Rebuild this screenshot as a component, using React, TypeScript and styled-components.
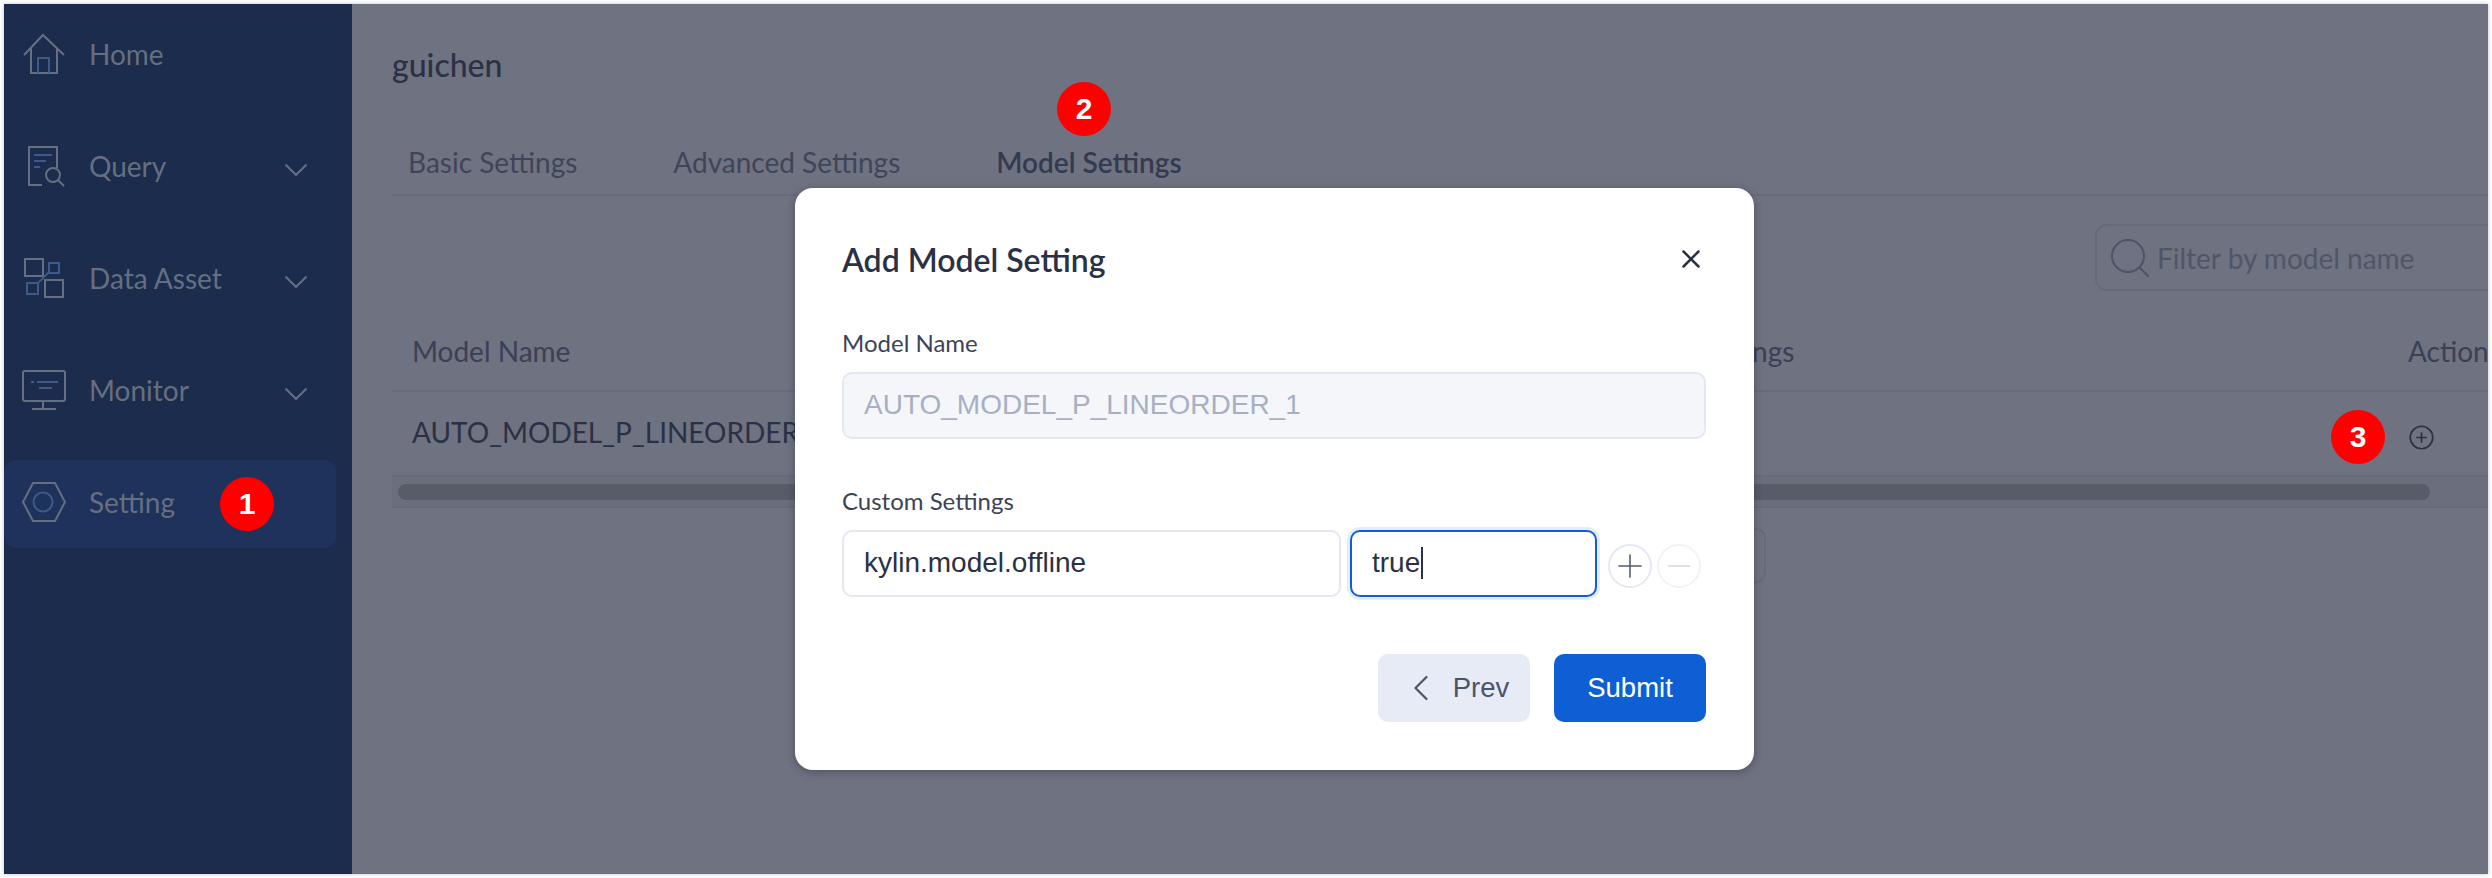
import React from 'react';
import styled, { createGlobalStyle } from 'styled-components';
import { ChevronDown, ChevronLeft, Search, Plus, Minus, X, CirclePlus } from 'lucide-react';

const Global = createGlobalStyle`
  html, body { margin: 0; padding: 0; background: #fff; }
  body { font-family: Lato, "Liberation Sans", sans-serif; }
`;

const Frame = styled.div`
  position: relative;
  width: 2492px;
  height: 878px;
  box-sizing: border-box;
  padding: 4px;
  overflow: hidden;
`;

const Screen = styled.div`
  display: flex;
  height: 100%;
  background: #6f7280;
  box-shadow: 0 0 4px rgba(0, 0, 0, 0.25);
`;

const Sidebar = styled.nav`
  width: 348px;
  flex: none;
  background: #1b2c4c;
  display: flex;
  flex-direction: column;
  gap: 24px;
  padding-top: 8px;
  box-sizing: border-box;
`;

const NavItem = styled.div<{ $active?: boolean }>`
  width: 332px;
  height: 88px;
  display: flex;
  align-items: center;
  box-sizing: border-box;
  padding: 0 20px 0 18px;
  border-radius: 12px;
  background: ${p => (p.$active ? '#1e325b' : 'transparent')};
  color: #666f82;
  font-size: 28px;
`;

const NavIcon = styled.svg`
  width: 44px;
  height: 44px;
  flex: none;
  margin: -4px 23px 0 0;
  fill: none;
  stroke: #666f82;
  stroke-width: 2;
`;

const NavLabel = styled.span`
  flex: 1;
  margin-top: -5px;
`;

const NavChevron = styled(ChevronDown)`
  color: #666f82;
  margin-top: 4px;
`;

const Content = styled.main`
  flex: 1;
  min-width: 0;
  padding-left: 40px;
  color: #2b3145;
  overflow: hidden;
`;

const PageTitle = styled.h1`
  margin: 43px 0 0;
  font-size: 32px;
  line-height: 36px;
  font-weight: 500;
  color: #2b3145;
`;

const Tabs = styled.div`
  display: flex;
  gap: 96px;
  height: 64px;
  box-sizing: border-box;
  margin-top: 49px;
  padding: 0 16px 3px;
  align-items: center;
  border-bottom: 2px solid #676a79;
  font-size: 28px;
`;

const Tab = styled.span<{ $active?: boolean }>`
  color: ${p => (p.$active ? '#343a50' : '#3f4559')};
  font-weight: ${p => (p.$active ? 600 : 400)};
`;

const FilterRow = styled.div`
  display: flex;
  justify-content: flex-end;
  margin-top: 28px;
`;

const FilterBox = styled.div`
  flex: 0 0 500px;
  height: 67px;
  margin-right: -107px;
  box-sizing: border-box;
  border: 2px solid #666a7b;
  border-radius: 12px;
  display: flex;
  align-items: center;
  gap: 3px;
  padding: 0 9px;
  color: #505668;
  font-size: 28px;
`;

const Table = styled.div`
  margin-top: 22px;
`;

const TableRow = styled.div<{ $head?: boolean }>`
  height: ${p => (p.$head ? 79 : 85)}px;
  display: flex;
  align-items: center;
  padding: 0 0 ${p => (p.$head ? 2 : 4)}px 20px;
  border-bottom: 2px solid #666a7b;
  box-sizing: border-box;
  font-size: 28px;
  color: ${p => (p.$head ? '#3a4056' : '#2b3145')};
`;

const Cell = styled.div<{ $w?: number }>`
  flex: ${p => (p.$w ? `0 0 ${p.$w}px` : '1')};
  white-space: nowrap;
`;

const RowAction = styled(CirclePlus)`
  display: block;
  margin-top: 12px;
  color: #2b3145;
`;

const ScrollTrack = styled.div`
  height: 31px;
  background: #6b6e7c;
  display: flex;
  align-items: center;
  padding-left: 6px;
  border-bottom: 2px solid #666a7b;
  box-sizing: border-box;
`;

const ScrollThumb = styled.div`
  width: 2032px;
  height: 16px;
  background: #585b68;
  border-radius: 8px;
`;

const PagerRow = styled.div`
  display: flex;
  justify-content: flex-end;
  width: 1374px;
  margin-top: 20px;
`;

const PagerBox = styled.div`
  width: 200px;
  height: 55px;
  box-sizing: border-box;
  border: 2px solid #666a7b;
  border-radius: 10px;
`;

const Badge = styled.span<{ $x: number; $y: number }>`
  position: absolute;
  left: ${p => p.$x}px;
  top: ${p => p.$y}px;
  width: 54px;
  height: 54px;
  border-radius: 50%;
  background: #fe0000;
  color: #fff;
  font: 700 30px/54px "Liberation Sans", sans-serif;
  text-align: center;
  z-index: 3;
`;

const Modal = styled.div`
  position: absolute;
  left: 795px;
  top: 188px;
  width: 959px;
  height: 582px;
  box-sizing: border-box;
  background: #fff;
  border-radius: 18px;
  box-shadow: 0 2px 8px rgba(30, 35, 55, 0.4);
  padding: 52px 48px 48px 47px;
  display: flex;
  flex-direction: column;
  z-index: 2;
`;

const ModalHead = styled.div`
  display: flex;
  justify-content: space-between;
  align-items: center;
  height: 38px;
`;

const ModalTitle = styled.h2`
  margin: 0;
  font-size: 32px;
  font-weight: 600;
  color: #2b3145;
`;

const CloseButton = styled(X)`
  color: #2b3145;
`;

const Field = styled.div<{ $top: number }>`
  margin-top: ${p => p.$top}px;
`;

const FieldLabel = styled.label`
  display: block;
  font-size: 24px;
  line-height: 28px;
  color: #3d4356;
  margin-bottom: 15px;
`;

const InputBox = styled.div<{ $disabled?: boolean; $focus?: boolean; $w?: number }>`
  height: 67px;
  ${p => (p.$w ? `flex: 0 0 ${p.$w}px; width: ${p.$w}px;` : '')}
  box-sizing: border-box;
  display: flex;
  align-items: center;
  padding: 0 20px 2px;
  border-radius: 10px;
  border: 2px solid ${p => (p.$focus ? '#0f5fd4' : '#e3e8f3')};
  background: ${p => (p.$disabled ? '#f4f6fa' : '#fff')};
  color: ${p => (p.$disabled ? '#a7b0c2' : '#2b3145')};
  box-shadow: ${p => (p.$focus ? '0 0 0 3px #e4edfa' : 'none')};
  font: 28px/1 "Liberation Sans", sans-serif;
`;

const Caret = styled.span`
  display: inline-block;
  width: 2px;
  height: 32px;
  margin-left: 1px;
  background: #2b3145;
`;

const SettingRow = styled.div`
  display: flex;
  align-items: center;
  gap: 9px;
`;

const RoundButton = styled.button<{ $off?: boolean }>`
  width: 44px;
  height: 44px;
  padding: 0;
  margin: 4px 0 0 ${p => (p.$off ? -4 : 2)}px;
  border-radius: 50%;
  background: #fff;
  display: flex;
  align-items: center;
  justify-content: center;
  border: 2px solid ${p => (p.$off ? '#f1f3f8' : '#e3e8f3')};
  color: ${p => (p.$off ? '#d3d7e0' : '#565c6e')};
`;

const ModalFooter = styled.div`
  display: flex;
  justify-content: flex-end;
  gap: 24px;
  margin-top: auto;
`;

const FooterButton = styled.button<{ $primary?: boolean }>`
  width: 152px;
  height: 68px;
  padding: 0;
  border: 0;
  border-radius: 10px;
  display: flex;
  align-items: center;
  justify-content: center;
  gap: 10px;
  background: ${p => (p.$primary ? '#0f5fd4' : '#e7ebf5')};
  color: ${p => (p.$primary ? '#fff' : '#4d5468')};
  font: 27.5px "Liberation Sans", sans-serif;
`;

const ACCENT = '#3d5a8a';

function HomeIcon() {
  return (
    <NavIcon viewBox="0 0 44 44">
      <path d="M2 23 21 3l21 20" />
      <path d="M9 16v25h26V16" />
      <path d="M16 41V26h11v15" stroke={ACCENT} />
    </NavIcon>
  );
}

function QueryIcon() {
  return (
    <NavIcon viewBox="0 0 44 44">
      <path d="M35 24V3H7v38h13" />
      <path d="M12 11h18M12 17h12M12 23h6" stroke={ACCENT} />
      <circle cx="31" cy="31" r="7" />
      <path d="m36 36 6 6" />
    </NavIcon>
  );
}

function AssetIcon() {
  return (
    <NavIcon viewBox="0 0 44 44">
      <rect x="3" y="3" width="18" height="17" />
      <rect x="27" y="7" width="10" height="10" stroke={ACCENT} />
      <rect x="5" y="27" width="11" height="11" stroke={ACCENT} />
      <rect x="23" y="24" width="18" height="17" />
      <path d="m16 27 11-11" stroke={ACCENT} />
    </NavIcon>
  );
}

function MonitorIcon() {
  return (
    <NavIcon viewBox="0 0 44 44">
      <rect x="1" y="3" width="42" height="30" rx="2" />
      <path d="M21 33v7M10 41h24" />
      <path d="M9 14h3M15 14h21M17 20h13" stroke={ACCENT} />
    </NavIcon>
  );
}

function SettingIcon() {
  return (
    <NavIcon viewBox="0 0 44 44">
      <path d="M11 3h22l10 19-10 19H11L1 22Z" />
      <circle cx="21" cy="22" r="9.5" stroke={ACCENT} />
    </NavIcon>
  );
}

export default function App() {
  return (
    <Frame>
      <Global />
      <Screen>
        <Sidebar>
          <NavItem><HomeIcon /><NavLabel>Home</NavLabel></NavItem>
          <NavItem><QueryIcon /><NavLabel>Query</NavLabel><NavChevron size={40} strokeWidth={1.2} /></NavItem>
          <NavItem><AssetIcon /><NavLabel>Data Asset</NavLabel><NavChevron size={40} strokeWidth={1.2} /></NavItem>
          <NavItem><MonitorIcon /><NavLabel>Monitor</NavLabel><NavChevron size={40} strokeWidth={1.2} /></NavItem>
          <NavItem $active><SettingIcon /><NavLabel>Setting</NavLabel></NavItem>
        </Sidebar>
        <Content>
          <PageTitle>guichen</PageTitle>
          <Tabs>
            <Tab>Basic Settings</Tab>
            <Tab>Advanced Settings</Tab>
            <Tab $active>Model Settings</Tab>
          </Tabs>
          <FilterRow>
            <FilterBox><Search size={48} strokeWidth={1} color="#4d5468" />Filter by model name</FilterBox>
          </FilterRow>
          <Table>
            <TableRow $head>
              <Cell $w={1182}>Model Name</Cell>
              <Cell $w={814}>Custom Settings</Cell>
              <Cell>Actions</Cell>
            </TableRow>
            <TableRow>
              <Cell $w={1996}>AUTO_MODEL_P_LINEORDER_1</Cell>
              <Cell><RowAction size={27} strokeWidth={1.5} /></Cell>
            </TableRow>
            <ScrollTrack><ScrollThumb /></ScrollTrack>
          </Table>
          <PagerRow><PagerBox /></PagerRow>
        </Content>
      </Screen>

      <Badge $x={220} $y={477}>1</Badge>
      <Badge $x={1057} $y={82}>2</Badge>
      <Badge $x={2331} $y={410}>3</Badge>

      <Modal>
        <ModalHead>
          <ModalTitle>Add Model Setting</ModalTitle>
          <CloseButton size={30} strokeWidth={2} />
        </ModalHead>
        <Field $top={51}>
          <FieldLabel>Model Name</FieldLabel>
          <InputBox $disabled>AUTO_MODEL_P_LINEORDER_1</InputBox>
        </Field>
        <Field $top={48}>
          <FieldLabel>Custom Settings</FieldLabel>
          <SettingRow>
            <InputBox $w={499}>kylin.model.offline</InputBox>
            <InputBox $w={247} $focus>true<Caret /></InputBox>
            <RoundButton><Plus size={38} strokeWidth={1} /></RoundButton>
            <RoundButton $off><Minus size={36} strokeWidth={1} /></RoundButton>
          </SettingRow>
        </Field>
        <ModalFooter>
          <FooterButton><ChevronLeft size={44} strokeWidth={1.2} />Prev</FooterButton>
          <FooterButton $primary>Submit</FooterButton>
        </ModalFooter>
      </Modal>
    </Frame>
  );
}
